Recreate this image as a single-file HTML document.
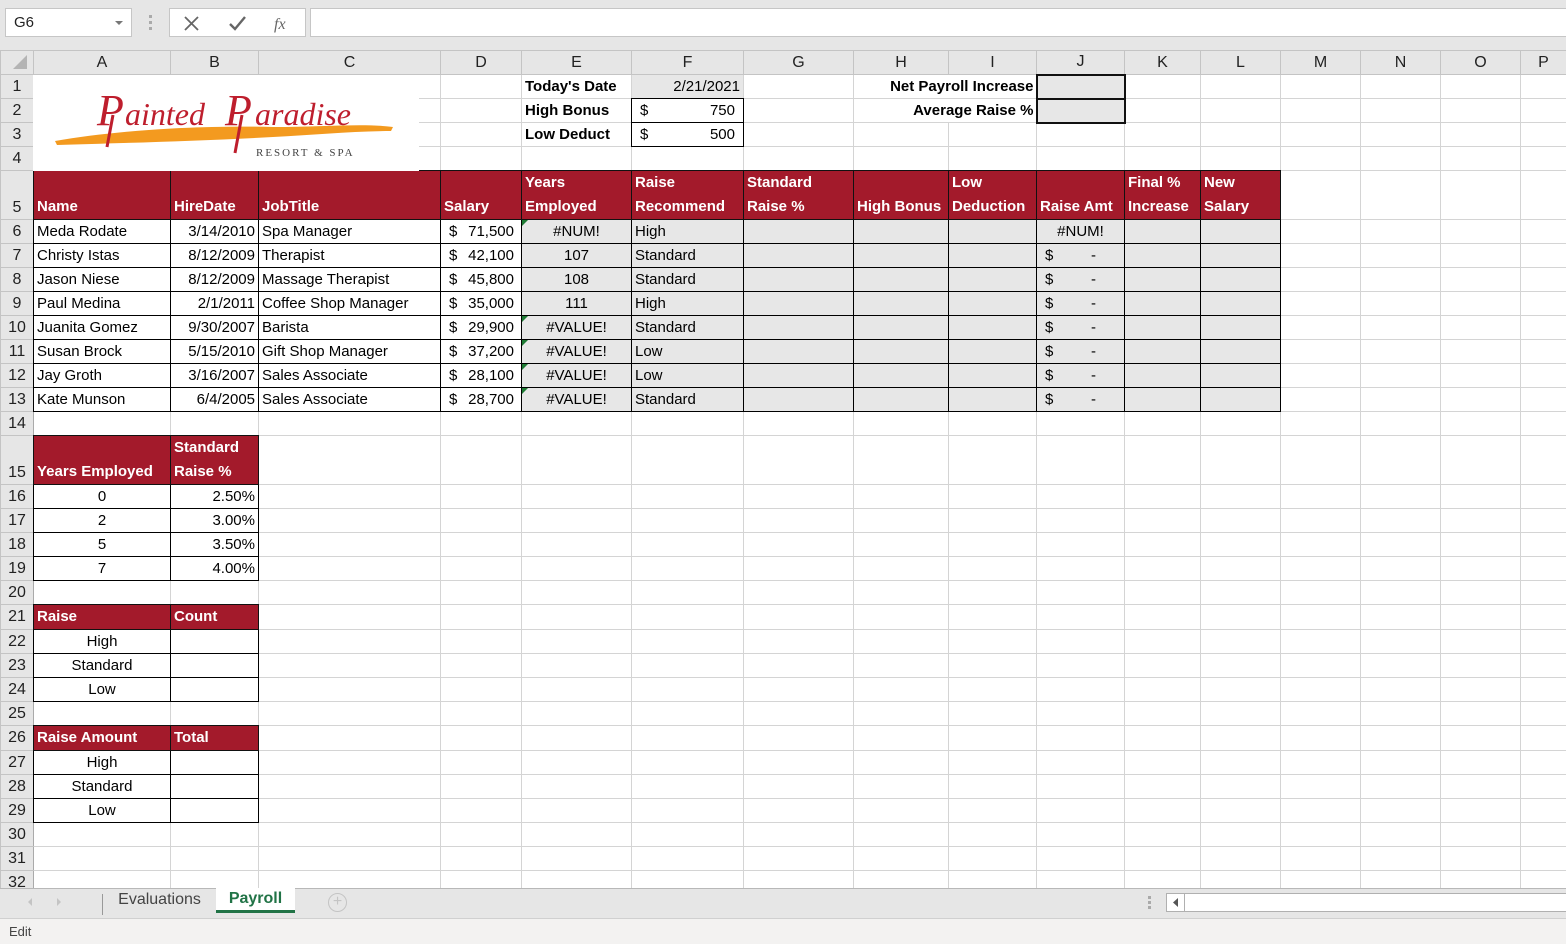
<!DOCTYPE html>
<html><head><meta charset="utf-8">
<style>
*{box-sizing:border-box;margin:0;padding:0}
body{width:1566px;height:944px;overflow:hidden;background:#fff;font-family:"Liberation Sans",Arial,sans-serif;position:relative}
#top{position:absolute;left:0;top:0;width:1566px;height:50px;background:#e6e6e6}
.nb{position:absolute;left:5px;top:8px;width:127px;height:29px;background:#fff;border:1px solid #c6c6c6;font-size:15px;line-height:27px;padding-left:8px;color:#222}
.nb:after{content:"";position:absolute;right:8px;top:12px;border:4px solid transparent;border-top:4px solid #777}
.fx{position:absolute;left:169px;top:8px;width:137px;height:29px;background:#fff;border:1px solid #c6c6c6}
.fb{position:absolute;left:310px;top:8px;width:1260px;height:29px;background:#fff;border:1px solid #c6c6c6}
#grid{position:absolute;left:0;top:50px;border-collapse:collapse;table-layout:fixed;width:1566px}
#grid td{border:1px solid #d4d4d4;font-size:15px;height:24px;padding:0 3px;white-space:nowrap;overflow:hidden;color:#000;line-height:22px;position:relative}
#grid tr.h td{height:24px;background:#e6e6e6;text-align:center;color:#222;border-color:#c4c4c4;font-size:16px}
#grid td.r{background:#e6e6e6;text-align:center;border-color:#c4c4c4;border-right-color:#aaa;padding:0;color:#222;font-size:16px}
#grid tr.t td{height:48px;vertical-align:bottom}
#grid td.k{border:1px double #000}
#grid td.hd{background:#a31a2b;color:#fff;font-weight:bold;line-height:24px;border:1px double #111;vertical-align:bottom}
#grid td.g{background:#e7e7e7}
#grid td.c{text-align:center}
#grid td.rt{text-align:right}
#grid td.bo{font-weight:bold}
.d{display:flex;justify-content:space-between}
.tri:before{content:"";position:absolute;left:0;top:0;border-top:6px solid #1e7b34;border-right:6px solid transparent}
#grid td.j{border:2px solid #111;background:#e7e7e7}
#logo{position:absolute;left:33px;top:75px;width:386px;height:96px;background:#fff}
#tabs{position:absolute;left:0;top:888px;width:1566px;height:30px;background:#e6e6e6;border-top:1px solid #b8b8b8}
#status{position:absolute;left:0;top:918px;width:1566px;height:26px;background:#f3f2f1;border-top:1px solid #d0d0d0;font-size:13px;color:#444;line-height:26px;padding-left:9px}
</style></head><body>
<div id="top">
<div class="nb">G6</div>
<div style="position:absolute;left:149px;top:15px;width:3px;height:3px;background:#aaa;box-shadow:0 6px 0 #aaa,0 12px 0 #aaa"></div>
<div class="fx">
<svg width="137" height="29" style="position:absolute;left:0;top:0">
<path d="M15 8 L28 21 M28 8 L15 21" stroke="#666" stroke-width="1.8" fill="none"/>
<path d="M60 15 L65 20 L75 8" stroke="#666" stroke-width="2.4" fill="none"/>
<text x="104" y="20" font-family="Liberation Serif" font-style="italic" font-size="16" fill="#666">fx</text>
</svg></div>
<div class="fb"></div>
</div>

<table id="grid">
<colgroup><col style="width:33px"><col style="width:137px"><col style="width:88px"><col style="width:182px"><col style="width:81px"><col style="width:110px"><col style="width:112px"><col style="width:110px"><col style="width:95px"><col style="width:88px"><col style="width:88px"><col style="width:76px"><col style="width:80px"><col style="width:80px"><col style="width:80px"><col style="width:80px"><col style="width:46px"></colgroup>
<tr class="h"><td style="background:#e6e6e6"><svg width="20" height="18" style="position:absolute;right:4px;bottom:3px"><path d="M18 2 L18 16 L4 16 Z" fill="#b4b4b4"/></svg></td><td>A</td><td>B</td><td>C</td><td>D</td><td>E</td><td>F</td><td>G</td><td>H</td><td>I</td><td>J</td><td>K</td><td>L</td><td>M</td><td>N</td><td>O</td><td>P</td></tr>
<tr><td class="r">1</td><td></td><td></td><td></td><td></td><td class="bo">Today's Date</td><td class="g rt">2/21/2021</td><td></td><td class="bo rt" colspan="2" style="padding-right:2px">Net Payroll Increase</td><td class="j"></td><td></td><td></td><td></td><td></td><td></td><td></td></tr>
<tr><td class="r">2</td><td></td><td></td><td></td><td></td><td class="bo">High Bonus</td><td class="k" style="padding:0 8px"><div class="d"><span>$</span><span>750</span></div></td><td></td><td class="bo rt" colspan="2" style="padding-right:2px">Average Raise %</td><td class="j"></td><td></td><td></td><td></td><td></td><td></td><td></td></tr>
<tr><td class="r">3</td><td></td><td></td><td></td><td></td><td class="bo">Low Deduct</td><td class="k" style="padding:0 8px"><div class="d"><span>$</span><span>500</span></div></td><td></td><td></td><td></td><td></td><td></td><td></td><td></td><td></td><td></td><td></td></tr>
<tr><td class="r">4</td><td></td><td></td><td></td><td></td><td></td><td></td><td></td><td></td><td></td><td></td><td></td><td></td><td></td><td></td><td></td><td></td></tr>
<tr class="t"><td class="r" style="vertical-align:bottom">5</td><td class="hd">Name</td><td class="hd">HireDate</td><td class="hd">JobTitle</td><td class="hd">Salary</td><td class="hd">Years<br>Employed</td><td class="hd">Raise<br>Recommend</td><td class="hd">Standard<br>Raise %</td><td class="hd">High Bonus</td><td class="hd">Low<br>Deduction</td><td class="hd">Raise Amt</td><td class="hd">Final %<br>Increase</td><td class="hd">New<br>Salary</td><td></td><td></td><td></td><td></td></tr>
<tr><td class="r">6</td><td class="k">Meda Rodate</td><td class="k rt">3/14/2010</td><td class="k">Spa Manager</td><td class="k" style="padding:0 7px 0 8px"><div class="d"><span>$</span><span>71,500</span></div></td><td class="k g c tri">#NUM!</td><td class="k g">High</td><td class="k g"></td><td class="k g"></td><td class="k g"></td><td class="k g c">#NUM!</td><td class="k g"></td><td class="k g"></td><td></td><td></td><td></td><td></td></tr>
<tr><td class="r">7</td><td class="k">Christy Istas</td><td class="k rt">8/12/2009</td><td class="k">Therapist</td><td class="k" style="padding:0 7px 0 8px"><div class="d"><span>$</span><span>42,100</span></div></td><td class="k g c">107</td><td class="k g">Standard</td><td class="k g"></td><td class="k g"></td><td class="k g"></td><td class="k g" style="padding:0 28px 0 8px"><div class="d"><span>$</span><span>-</span></div></td><td class="k g"></td><td class="k g"></td><td></td><td></td><td></td><td></td></tr>
<tr><td class="r">8</td><td class="k">Jason Niese</td><td class="k rt">8/12/2009</td><td class="k">Massage Therapist</td><td class="k" style="padding:0 7px 0 8px"><div class="d"><span>$</span><span>45,800</span></div></td><td class="k g c">108</td><td class="k g">Standard</td><td class="k g"></td><td class="k g"></td><td class="k g"></td><td class="k g" style="padding:0 28px 0 8px"><div class="d"><span>$</span><span>-</span></div></td><td class="k g"></td><td class="k g"></td><td></td><td></td><td></td><td></td></tr>
<tr><td class="r">9</td><td class="k">Paul Medina</td><td class="k rt">2/1/2011</td><td class="k">Coffee Shop Manager</td><td class="k" style="padding:0 7px 0 8px"><div class="d"><span>$</span><span>35,000</span></div></td><td class="k g c">111</td><td class="k g">High</td><td class="k g"></td><td class="k g"></td><td class="k g"></td><td class="k g" style="padding:0 28px 0 8px"><div class="d"><span>$</span><span>-</span></div></td><td class="k g"></td><td class="k g"></td><td></td><td></td><td></td><td></td></tr>
<tr><td class="r">10</td><td class="k">Juanita Gomez</td><td class="k rt">9/30/2007</td><td class="k">Barista</td><td class="k" style="padding:0 7px 0 8px"><div class="d"><span>$</span><span>29,900</span></div></td><td class="k g c tri">#VALUE!</td><td class="k g">Standard</td><td class="k g"></td><td class="k g"></td><td class="k g"></td><td class="k g" style="padding:0 28px 0 8px"><div class="d"><span>$</span><span>-</span></div></td><td class="k g"></td><td class="k g"></td><td></td><td></td><td></td><td></td></tr>
<tr><td class="r">11</td><td class="k">Susan Brock</td><td class="k rt">5/15/2010</td><td class="k">Gift Shop Manager</td><td class="k" style="padding:0 7px 0 8px"><div class="d"><span>$</span><span>37,200</span></div></td><td class="k g c tri">#VALUE!</td><td class="k g">Low</td><td class="k g"></td><td class="k g"></td><td class="k g"></td><td class="k g" style="padding:0 28px 0 8px"><div class="d"><span>$</span><span>-</span></div></td><td class="k g"></td><td class="k g"></td><td></td><td></td><td></td><td></td></tr>
<tr><td class="r">12</td><td class="k">Jay Groth</td><td class="k rt">3/16/2007</td><td class="k">Sales Associate</td><td class="k" style="padding:0 7px 0 8px"><div class="d"><span>$</span><span>28,100</span></div></td><td class="k g c tri">#VALUE!</td><td class="k g">Low</td><td class="k g"></td><td class="k g"></td><td class="k g"></td><td class="k g" style="padding:0 28px 0 8px"><div class="d"><span>$</span><span>-</span></div></td><td class="k g"></td><td class="k g"></td><td></td><td></td><td></td><td></td></tr>
<tr><td class="r">13</td><td class="k">Kate Munson</td><td class="k rt">6/4/2005</td><td class="k">Sales Associate</td><td class="k" style="padding:0 7px 0 8px"><div class="d"><span>$</span><span>28,700</span></div></td><td class="k g c tri">#VALUE!</td><td class="k g">Standard</td><td class="k g"></td><td class="k g"></td><td class="k g"></td><td class="k g" style="padding:0 28px 0 8px"><div class="d"><span>$</span><span>-</span></div></td><td class="k g"></td><td class="k g"></td><td></td><td></td><td></td><td></td></tr>
<tr><td class="r">14</td><td></td><td></td><td></td><td></td><td></td><td></td><td></td><td></td><td></td><td></td><td></td><td></td><td></td><td></td><td></td><td></td></tr>
<tr class="t"><td class="r" style="vertical-align:bottom">15</td><td class="hd">Years Employed</td><td class="hd">Standard<br>Raise %</td><td></td><td></td><td></td><td></td><td></td><td></td><td></td><td></td><td></td><td></td><td></td><td></td><td></td><td></td></tr>
<tr><td class="r">16</td><td class="k c">0</td><td class="k rt">2.50%</td><td></td><td></td><td></td><td></td><td></td><td></td><td></td><td></td><td></td><td></td><td></td><td></td><td></td><td></td></tr>
<tr><td class="r">17</td><td class="k c">2</td><td class="k rt">3.00%</td><td></td><td></td><td></td><td></td><td></td><td></td><td></td><td></td><td></td><td></td><td></td><td></td><td></td><td></td></tr>
<tr><td class="r">18</td><td class="k c">5</td><td class="k rt">3.50%</td><td></td><td></td><td></td><td></td><td></td><td></td><td></td><td></td><td></td><td></td><td></td><td></td><td></td><td></td></tr>
<tr><td class="r">19</td><td class="k c">7</td><td class="k rt">4.00%</td><td></td><td></td><td></td><td></td><td></td><td></td><td></td><td></td><td></td><td></td><td></td><td></td><td></td><td></td></tr>
<tr><td class="r">20</td><td></td><td></td><td></td><td></td><td></td><td></td><td></td><td></td><td></td><td></td><td></td><td></td><td></td><td></td><td></td><td></td></tr>
<tr><td class="r">21</td><td class="hd">Raise</td><td class="hd">Count</td><td></td><td></td><td></td><td></td><td></td><td></td><td></td><td></td><td></td><td></td><td></td><td></td><td></td><td></td></tr>
<tr><td class="r">22</td><td class="k c">High</td><td class="k"></td><td></td><td></td><td></td><td></td><td></td><td></td><td></td><td></td><td></td><td></td><td></td><td></td><td></td><td></td></tr>
<tr><td class="r">23</td><td class="k c">Standard</td><td class="k"></td><td></td><td></td><td></td><td></td><td></td><td></td><td></td><td></td><td></td><td></td><td></td><td></td><td></td><td></td></tr>
<tr><td class="r">24</td><td class="k c">Low</td><td class="k"></td><td></td><td></td><td></td><td></td><td></td><td></td><td></td><td></td><td></td><td></td><td></td><td></td><td></td><td></td></tr>
<tr><td class="r">25</td><td></td><td></td><td></td><td></td><td></td><td></td><td></td><td></td><td></td><td></td><td></td><td></td><td></td><td></td><td></td><td></td></tr>
<tr><td class="r">26</td><td class="hd">Raise Amount</td><td class="hd">Total</td><td></td><td></td><td></td><td></td><td></td><td></td><td></td><td></td><td></td><td></td><td></td><td></td><td></td><td></td></tr>
<tr><td class="r">27</td><td class="k c">High</td><td class="k"></td><td></td><td></td><td></td><td></td><td></td><td></td><td></td><td></td><td></td><td></td><td></td><td></td><td></td><td></td></tr>
<tr><td class="r">28</td><td class="k c">Standard</td><td class="k"></td><td></td><td></td><td></td><td></td><td></td><td></td><td></td><td></td><td></td><td></td><td></td><td></td><td></td><td></td></tr>
<tr><td class="r">29</td><td class="k c">Low</td><td class="k"></td><td></td><td></td><td></td><td></td><td></td><td></td><td></td><td></td><td></td><td></td><td></td><td></td><td></td><td></td></tr>
<tr><td class="r">30</td><td></td><td></td><td></td><td></td><td></td><td></td><td></td><td></td><td></td><td></td><td></td><td></td><td></td><td></td><td></td><td></td></tr>
<tr><td class="r">31</td><td></td><td></td><td></td><td></td><td></td><td></td><td></td><td></td><td></td><td></td><td></td><td></td><td></td><td></td><td></td><td></td></tr>
<tr><td class="r">32</td><td></td><td></td><td></td><td></td><td></td><td></td><td></td><td></td><td></td><td></td><td></td><td></td><td></td><td></td><td></td><td></td></tr>
</table>

<div id="logo">
<svg width="386" height="96">
<path d="M22 66 C80 56 160 50 240 52 C290 52 330 48 360 52 L358 56 C320 56 280 60 240 62 C170 66 90 68 24 70 Z" fill="#f39a1f"/>
<text x="64" y="50" font-family="Liberation Serif" font-style="italic" font-size="44" fill="#be1e2d">P</text>
<text x="92" y="50" font-family="Liberation Serif" font-style="italic" font-size="32" fill="#be1e2d">ainted</text>
<text x="192" y="50" font-family="Liberation Serif" font-style="italic" font-size="44" fill="#be1e2d">P</text>
<text x="222" y="50" font-family="Liberation Serif" font-style="italic" font-size="32" fill="#be1e2d">aradise</text>
<path d="M80 40 L74 72 M209 40 L202 78" stroke="#be1e2d" stroke-width="3" fill="none"/>
<text x="223" y="81" font-family="Liberation Serif" font-size="11" letter-spacing="2" fill="#444">RESORT &amp; SPA</text>
</svg>
</div>

<div id="tabs">
<svg width="80" height="28" style="position:absolute;left:20px;top:0"><path d="M12 9 L8 13 L12 17Z M37 9 L41 13 L37 17Z" fill="#c4c4c4"/></svg>
<div style="position:absolute;left:102px;top:5px;width:1px;height:21px;background:#999"></div>
<div style="position:absolute;left:103px;top:0;width:113px;height:26px;font-size:16px;color:#444;text-align:center;line-height:22px">Evaluations</div>
<div style="position:absolute;left:216px;top:-1px;width:79px;height:25px;background:#fff;border-bottom:3px solid #217346;font-size:16px;color:#217346;font-weight:bold;text-align:center;line-height:22px">Payroll</div>
<div style="position:absolute;left:328px;top:4px;width:19px;height:19px;border:1px solid #c4c4c4;border-radius:50%;color:#c4c4c4;font-size:16px;line-height:16px;text-align:center">+</div>
<div style="position:absolute;left:1148px;top:7px;width:3px;height:3px;background:#aaa;box-shadow:0 5px 0 #aaa,0 10px 0 #aaa"></div>
<div style="position:absolute;left:1166px;top:4px;width:410px;height:19px;background:#fff;border:1px solid #b0b0b0"></div>
<div style="position:absolute;left:1166px;top:4px;width:19px;height:19px;border:1px solid #b0b0b0;background:#fff"><svg width="17" height="17"><path d="M11 4 L6 8.5 L11 13Z" fill="#555"/></svg></div>
</div>
<div id="status">Edit</div>
</body></html>
